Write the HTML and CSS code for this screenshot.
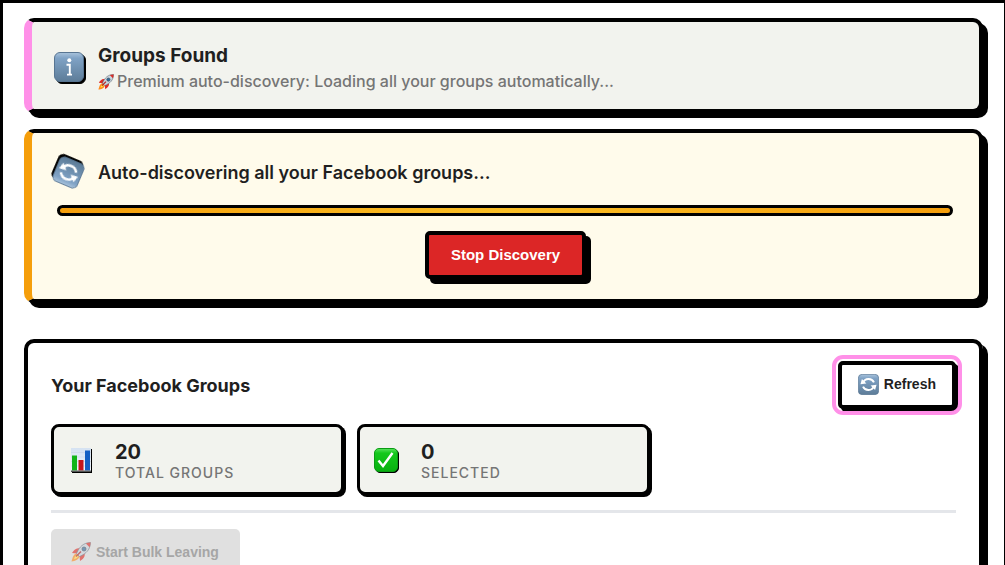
FILE: index.html
```html
<!DOCTYPE html>
<html lang="en">
<head>
<meta charset="utf-8">
<meta name="viewport" content="width=device-width, initial-scale=1">
<title>Facebook Groups</title>
<link rel="stylesheet" href="styles.css">
</head>
<body>
<svg class="sprite" aria-hidden="true">
  <defs>
    <linearGradient id="blue" x1="0" y1="0" x2="0" y2="1">
      <stop offset="0" stop-color="#a9c3dc"/><stop offset=".2" stop-color="#7fa2c5"/><stop offset="1" stop-color="#5d7c98"/>
    </linearGradient>
    <linearGradient id="green" x1="0" y1="0" x2="0" y2="1">
      <stop offset="0" stop-color="#5be35f"/><stop offset=".2" stop-color="#14c81c"/><stop offset="1" stop-color="#08b010"/>
    </linearGradient>
    <linearGradient id="paper" x1="0" y1="0" x2="0" y2="1">
      <stop offset="0" stop-color="#d5e2f2"/><stop offset="1" stop-color="#f4f8fc"/>
    </linearGradient>
    <symbol id="info" viewBox="0 0 30 30">
      <rect x=".5" y=".5" width="29" height="29" rx="5.500" fill="url(#blue)" stroke="#587592"/>
      <circle cx="15.300" cy="8.300" r="2" fill="#fff"/>
      <path d="M12.500 12.700h3.300v10M13 22.600h5" fill="none" stroke="#fff" stroke-width="1.900"/>
    </symbol>
    <symbol id="sync" viewBox="0 0 30 30">
      <rect x=".5" y=".5" width="29" height="29" rx="5.500" fill="url(#blue)" stroke="#587592"/>
      <path d="M7.200 12.500A8.500 8.500 0 0 1 22.800 12M22.800 17.500A8.500 8.500 0 0 1 7.200 18" fill="none" stroke="#fff" stroke-width="2.800"/>
      <path d="M3.500 14.800L5.600 7.200L12 13.600ZM26.500 15.200L24.400 22.800L18 16.400Z" fill="#fff"/>
    </symbol>
    <symbol id="check" viewBox="0 0 24 24">
      <rect x=".5" y=".5" width="23" height="23" rx="4.500" fill="url(#green)" stroke="#0b9c14"/>
      <path d="M4.500 12.500L9 18L18.500 5" fill="none" stroke="#fff" stroke-width="2.400"/>
    </symbol>
    <symbol id="chart" viewBox="0 0 20 24">
      <path fill="url(#paper)" d="M0 0h20v24H0z"/>
      <path d="M0 4.500h20M0 9h20M0 13.500h20M0 18h20" stroke="#c4d3e5" stroke-width=".5"/>
      <path fill="#12b51a" d="M1 7.500h5v15H1z"/>
      <path fill="#c4161c" d="M7.500 12h5v10.500h-5z"/>
      <path fill="#1460c4" d="M14 2.500h5v20h-5z"/>
      <path fill="#555" d="M0 22.500h20V24H0z"/>
    </symbol>
    <symbol id="rocket" viewBox="0 0 20 20">
      <path d="M6.500 11.500C2.500 11.500 2 14.500.5 19.500C4 19 8 18 8.500 14Z" fill="#ff8a1e"/>
      <path d="M6 13C4 13.500 3.500 15.500 3 17.200C5 16.800 6.800 15.800 7.200 14.200Z" fill="#ffe04a"/>
      <path d="M9 6.500C5 5.500 3 8 1 11L6 11.500ZM13.500 11C14.500 15 12 17 9 19L8.500 14Z" fill="#e02b24"/>
      <path d="M19.500.5C12.500.8 8.500 4.500 5.500 11.500L8.500 14.500C15.500 11.500 19.200 7.500 19.500.5Z" fill="#cbd5de" stroke="#51606c" stroke-width=".7"/>
      <path d="M19.500.5C17.800.5 16.300.8 14.800 1.400L18.600 5.200C19.200 3.700 19.500 2.200 19.500.5Z" fill="#d92d27"/>
      <circle cx="13" cy="7" r="2" fill="#2f6b9d" stroke="#344554" stroke-width=".8"/>
      <path d="M5 14.500L10 9.500" stroke="#b51e1e" stroke-width="1.500"/>
    </symbol>
  </defs>
</svg>

<main class="panel">
  <section class="notice notice-info">
    <div class="notice-row">
      <svg class="badge" aria-hidden="true"><use href="#info"/></svg>
      <div>
        <h2 class="notice-title">Groups Found</h2>
        <p class="notice-text"><svg class="inline-icon" aria-hidden="true"><use href="#rocket"/></svg>Premium auto-discovery: Loading all your groups automatically...</p>
      </div>
    </div>
  </section>

  <section class="notice notice-progress">
    <div class="notice-row">
      <svg class="badge badge-spin" aria-hidden="true"><use href="#sync"/></svg>
      <h2 class="progress-title">Auto-discovering all your Facebook groups...</h2>
    </div>
    <div class="progress" role="progressbar" aria-label="Discovery progress"></div>
    <button class="button button-stop" type="button">Stop Discovery</button>
  </section>

  <section class="groups">
    <header class="groups-header">
      <h2 class="groups-title">Your Facebook Groups</h2>
      <button class="button button-refresh" type="button"><svg class="refresh-icon" aria-hidden="true"><use href="#sync"/></svg>Refresh</button>
    </header>
    <div class="stats">
      <div class="stat">
        <div class="stat-icon"><svg class="chart-icon" aria-hidden="true"><use href="#chart"/></svg></div>
        <div><div class="stat-value">20</div><div class="stat-label">Total Groups</div></div>
      </div>
      <div class="stat">
        <div class="stat-icon"><svg class="check-icon" aria-hidden="true"><use href="#check"/></svg></div>
        <div><div class="stat-value">0</div><div class="stat-label">Selected</div></div>
      </div>
    </div>
    <div class="actions">
      <button class="button button-start" type="button" disabled><svg class="start-icon" aria-hidden="true"><use href="#rocket"/></svg>Start Bulk Leaving</button>
    </div>
  </section>
</main>
</body>
</html>
```
FILE: styles.css
```css
* {
  box-sizing: border-box;
}

html {
  overflow: hidden;
}

body {
  margin: 0;
  background: #fff;
  color: #1f1f1f;
  font-family: Inter, sans-serif;
}

h2,
p {
  margin: 0;
}

.sprite {
  position: absolute;
  width: 0;
  height: 0;
}

.panel {
  border: 3px solid #000;
  border-right-width: 1px;
  padding: 15px 21px;
}

.notice {
  border: 4px solid #000;
  border-left-width: 8px;
  border-radius: 10px;
  box-shadow: 5px 5px 0 #000;
}

.notice-info {
  margin-bottom: 16px;
  padding: 19px 21px 16px;
  background: #f2f3ee;
  border-left-color: #ff90e8;
}

.notice-progress {
  margin-bottom: 36px;
  padding: 20px 21px;
  background: #fffbeb;
  border-left-color: #f59e0b;
}

.notice-row {
  display: flex;
  align-items: center;
  gap: 14px;
}

.badge {
  flex: none;
  width: 30px;
  height: 30px;
  margin-left: 1px;
  overflow: visible;
  filter: drop-shadow(2px 2px 0 #000);
}

.badge-spin {
  width: 27px;
  height: 27px;
  margin-left: 2px;
  margin-right: 2px;
  transform: rotate(203deg);
}

.notice-title {
  padding-top: 2px;
  font-size: 19px;
  line-height: 26px;
  font-weight: 700;
}

.notice-text {
  color: #757575;
  font-size: 16px;
  line-height: 24px;
  font-weight: 500;
}

.inline-icon {
  width: 16px;
  height: 16px;
  margin-right: 3px;
  vertical-align: -3px;
}

.progress-title {
  padding-top: 1px;
  font-size: 18px;
  line-height: 37px;
  font-weight: 600;
}

.progress {
  height: 11px;
  margin: 14px 5px 15px 4px;
  border: 3px solid #000;
  border-radius: 6px;
  background: linear-gradient(90deg, #f59e0b, #fbbf24, #f59e0b);
}

.button {
  display: flex;
  align-items: center;
  justify-content: center;
  height: 48px;
  padding: 0 16px 2px;
  border: 4px solid #000;
  border-radius: 5px;
  font-family: "Liberation Sans", Arial, sans-serif;
  font-weight: 700;
  font-size: 14px;
}

.button-stop {
  margin: 0 auto;
  padding: 0 22px 2px;
  background: #dc2626;
  color: #fff;
  font-size: 15px;
  box-shadow: 5px 5px 0 #000;
}

.groups {
  padding: 18px 23px;
  border: 4px solid #000;
  border-radius: 10px;
  box-shadow: 5px 5px 0 #000;
}

.groups-header {
  display: flex;
  align-items: center;
  justify-content: space-between;
  margin-bottom: 15px;
}

.groups-title {
  padding-top: 2px;
  font-size: 18px;
  line-height: 24px;
  font-weight: 700;
}

.button-refresh {
  gap: 5px;
  background: #fff;
  color: #1f1f1f;
  box-shadow: 3px 3px 0 #000;
  outline: 4px solid #ff90e8;
  outline-offset: 2px;
}

.refresh-icon {
  width: 21px;
  height: 21px;
}

.stats {
  display: grid;
  grid-template-columns: repeat(3, 1fr);
  gap: 13px;
  padding-bottom: 15px;
  border-bottom: 3px solid #e4e6ea;
}

.stat {
  display: flex;
  align-items: center;
  height: 71px;
  padding: 0 14px;
  background: #f2f3ee;
  border: 3px solid #000;
  border-radius: 8px;
  box-shadow: 2px 2px 0 #000;
}

.stat-icon {
  display: flex;
  width: 47px;
}

.chart-icon {
  width: 20px;
  height: 24px;
  margin-left: 3px;
  overflow: visible;
  filter: drop-shadow(1px 1px 0 #000);
}

.check-icon {
  width: 24px;
  height: 24px;
  overflow: visible;
  filter: drop-shadow(1px 1px 0 #000);
}

.stat-value {
  padding-top: 4px;
  font-size: 20px;
  line-height: 22px;
  font-weight: 700;
}

.stat-label {
  color: #757575;
  font-size: 14px;
  line-height: 20px;
  font-weight: 500;
  letter-spacing: 1px;
  text-transform: uppercase;
}

.actions {
  display: flex;
  padding-top: 16px;
}

.button-start {
  gap: 5px;
  padding: 0 21px 2px 20px;
  border: 0;
  background: #e0e0e0;
  color: #a6a6a6;
}

.start-icon {
  width: 20px;
  height: 20px;
  opacity: 0.6;
}
```
